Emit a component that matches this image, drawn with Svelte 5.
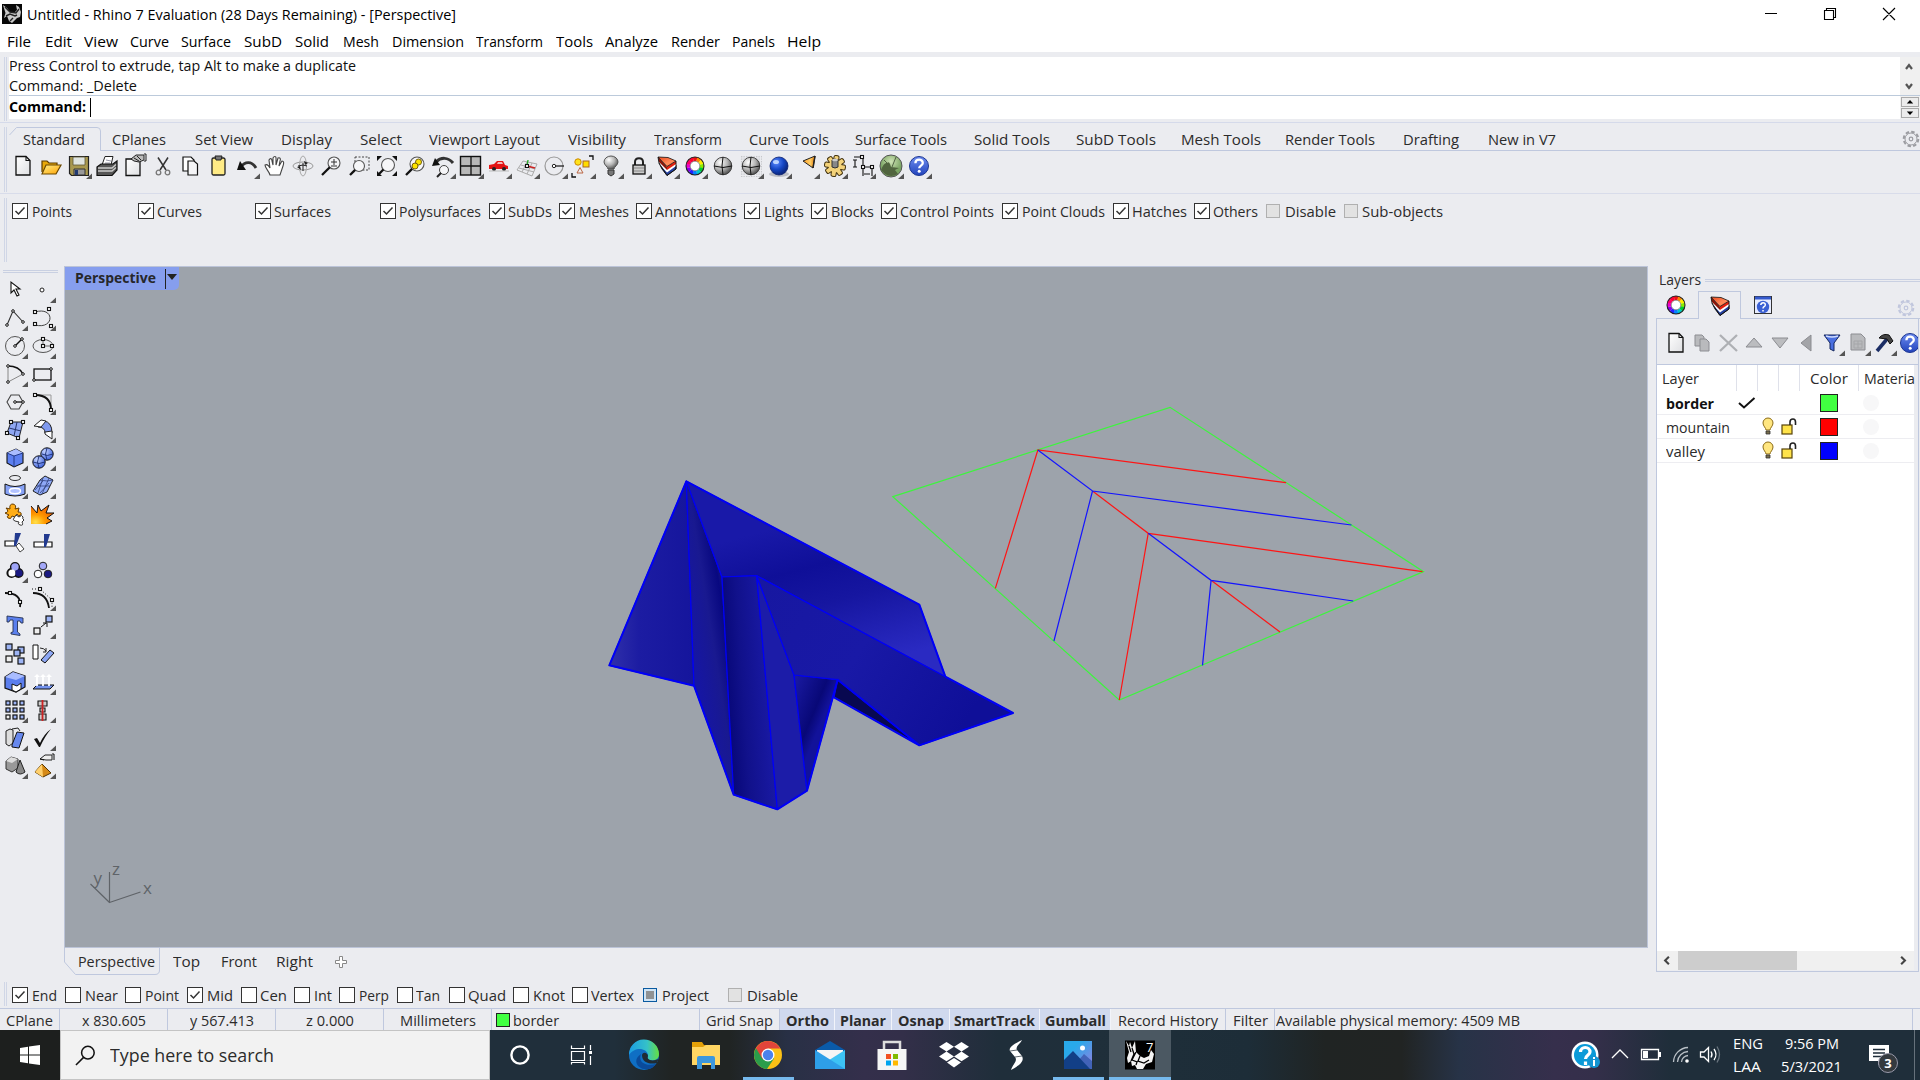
<script>
  // Turns [label, from, to, ...extra] entries into labels with a leading gap and a width.
  function flow(items, start = 0) {
    let end = start;
    return items.map(([label, from, to, ...extra]) => {
      const gap = from - 1 - end;
      end = to + 1;
      return { label, gap, width: to - from + 2, extra };
    });
  }

  // Same for check boxes: [label, box, text, textEnd, state]
  function flowChecks(items) {
    let end = 0;
    return items.map(([label, box, from, to, state]) => {
      const size = state === 'on' || state === 'off' ? 16 : 14;
      const c = { label, gap: box - end, inner: from - 1 - box - size, width: to - from + 2, state };
      end = to + 1;
      return c;
    });
  }

  function fit(node, width) {
    const natural = node.getBoundingClientRect().width;
    node.style.transform = `scaleX(${width / natural})`;
    node.style.marginRight = `${width - natural}px`;
  }

  const menu = flow([['File', 7, 29], ['Edit', 45, 70], ['View', 84, 116], ['Curve', 130, 167], ['Surface', 181, 229], ['SubD', 244, 280], ['Solid', 295, 327], ['Mesh', 343, 377], ['Dimension', 392, 462], ['Transform', 476, 541], ['Tools', 556, 591], ['Analyze', 605, 656], ['Render', 671, 718], ['Panels', 732, 773], ['Help', 787, 819]]);

  const tabs = flow([['CPlanes', 113, 165], ['Set View', 196, 252], ['Display', 282, 331], ['Select', 361, 401], ['Viewport Layout', 430, 539], ['Visibility', 569, 625], ['Transform', 655, 721], ['Curve Tools', 750, 828], ['Surface Tools', 856, 946], ['Solid Tools', 975, 1049], ['SubD Tools', 1077, 1155], ['Mesh Tools', 1182, 1260], ['Render Tools', 1286, 1374], ['Drafting', 1404, 1458], ['New in V7', 1489, 1555]], 100);

  const filters = flowChecks([['Points', 12, 33, 71, 'on'], ['Curves', 138, 158, 201, 'on'], ['Surfaces', 255, 275, 330, 'on'], ['Polysurfaces', 380, 400, 480, 'on'], ['SubDs', 489, 509, 551, 'on'], ['Meshes', 559, 580, 628, 'on'], ['Annotations', 636, 656, 736, 'on'], ['Lights', 744, 765, 803, 'on'], ['Blocks', 811, 832, 873, 'on'], ['Control Points', 881, 901, 993, 'on'], ['Point Clouds', 1002, 1023, 1104, 'on'], ['Hatches', 1113, 1133, 1186, 'on'], ['Others', 1194, 1214, 1257, 'on'], ['Disable', 1266, 1286, 1335, 'dis'], ['Sub-objects', 1344, 1363, 1442, 'dis']]);

  const osnaps = flowChecks([['End', 12, 33, 56, 'on'], ['Near', 65, 86, 117, 'off'], ['Point', 125, 146, 178, 'off'], ['Mid', 187, 208, 232, 'on'], ['Cen', 241, 261, 286, 'off'], ['Int', 294, 315, 331, 'off'], ['Perp', 339, 360, 388, 'off'], ['Tan', 397, 417, 439, 'off'], ['Quad', 449, 469, 505, 'off'], ['Knot', 513, 534, 564, 'off'], ['Vertex', 572, 592, 633, 'off'], ['Project', 643, 663, 708, 'part'], ['Disable', 728, 748, 797, 'dis']]);

  const viewTabs = flow([['Top', 174, 199], ['Front', 222, 256], ['Right', 277, 312]], 160);

  // [label, cell width, text width, kind]
  const status = [['CPlane', 60, 47], ['x 830.605', 108, 64], ['y 567.413', 108, 64], ['z 0.000', 108, 48], ['Millimeters', 108, 76], ['border', 208, 46, 'layer'], ['Grid Snap', 80, 67], ['Ortho', 55, 43, 'toggled'], ['Planar', 57, 46, 'toggled'], ['Osnap', 58, 46, 'toggled'], ['SmartTrack', 90, 81, 'toggled'], ['Gumball', 71, 61, 'toggled'], ['Record History', 115, 100], ['Filter', 49, 35], ['Available physical memory: 4509 MB', 638, 244, 'mem']];

  const lens = (x, y, r) => `<circle cx="${x}" cy="${y}" r="${r}" fill="#f6f6f8" stroke="#555" stroke-width="1.1"/><path d="M${x - r * 0.7} ${y + r * 0.7}L-9 9" stroke="#111" stroke-width="2.3"/>`;
  const node = (x, y, c = '#fff', s = 4) => `<rect x="${x - s / 2}" y="${y - s / 2}" width="${s}" height="${s}" fill="${c}" stroke="#111" stroke-width="1.1"/>`;
  const dot = (x, y) => `<circle cx="${x}" cy="${y}" r="1.3" fill="#fff" stroke="#111" stroke-width="1"/>`;
  const box = (x, y, s, c = '#9db4f4') => `<rect x="${x}" y="${y}" width="${s}" height="${s}" fill="${c}" stroke="#111" stroke-width="1.2"/>`;
  const hues = ['#e11', '#f80', '#fe0', '#8e0', '#0c3', '#0cc', '#08f', '#22f', '#80e', '#e0c', '#f06', '#f03'];
  const wheel = hues.map((c, i) => {
    const p = (a, r) => `${(r * Math.sin(a)).toFixed(2)} ${(-r * Math.cos(a)).toFixed(2)}`;
    const a = (i - 0.5) * Math.PI / 6, b = (i + 0.55) * Math.PI / 6;
    return `<path d="M${p(a, 5)}L${p(a, 9)}A9 9 0 0 1 ${p(b, 9)}L${p(b, 5)}Z" fill="${c}"/>`;
  }).join('') + '<circle r="9" fill="none" stroke="#222" stroke-width="1.1"/><circle r="4.8" fill="#fff" stroke="#555" stroke-width=".6"/>';
  const page = '<path d="M-7-9.500H3L7-5.500V9H-7Z" fill="url(#paper)" stroke="#111" stroke-width="1.300"/><path d="M3-9.500V-5.500H7" fill="none" stroke="#111" stroke-width="1.100"/>';
  const stack = '<path d="M-8-3L-5 3L0 9.500L9 3V-1L0 5Z" fill="#24409f" stroke="#111" stroke-width=".9"/><path d="M-8.500-5L0 3.500L9-2.500V0L0 6.500L-7-1Z" fill="#fff"/><path d="M-9-9L0 .500V4L-8-4Z" fill="#8e1508"/><path d="M0 .500L9-5V-2L0 4Z" fill="#e3200e"/><path d="M-9-9L1-8.500L9-5L0 .500Z" fill="url(#topface)" stroke="#111" stroke-width=".8"/><path d="M-9-9L-8-3L0 9.500L9 3V-5" fill="none" stroke="#111" stroke-width=".9"/>';
  const help = '<circle r="9.5" fill="url(#qblue)" stroke="#1c3692"/><path d="M-3.6-2.8C-3.6-7.4 3.8-7.4 3.8-3C3.8-.4.2-.3.2 2.2" fill="none" stroke="#fff" stroke-width="2.3"/><circle cx=".2" cy="5.3" r="1.5" fill="#fff"/>';
  const globe = '<circle r="8.800" fill="url(#ball)" stroke="#333" stroke-width=".9"/><path d="M-9 0Q0 3 9 0M0-9Q-2 0 0 9" fill="none" stroke="#111" stroke-width="1"/>';
  const teeth = [0, 45, 90, 135, 180, 225, 270, 315].map((a) => `<rect x="-2" y="-10" width="4" height="6" rx="1" transform="rotate(${a + 10})"/>`).join('');

  const icons = {
    page,
    open: '<path d="M-9 6V-5H-4L-2-3H6V-1" fill="#e8a90b" stroke="#5d3d00" stroke-width="1.2"/><path d="M-9 8L-5-1H10L5 8Z" fill="url(#fold)" stroke="#6d4900" stroke-width="1.2"/>',
    save: '<path d="M-9.500-9.500H9.500V9.500H-7.500L-9.500 7.500Z" fill="#a8984f" stroke="#222" stroke-width="1.2"/><path d="M-6-9H6V-1H-6Z" fill="#dfe4e0" stroke="#5e5635" stroke-width=".8"/><path d="M-5 3H6V9H-5Z" fill="#999" stroke="#333"/><path d="M-4 4H-1V9H-4Z" fill="#223a70"/>',
    print: '<path d="M-5-1L-2-9.500H6L4-1Z" fill="#fff" stroke="#222"/><path d="M-1-6L4-5M-2-3L3-3" stroke="#99a"/><path d="M-10 1L-6-2H6L10-5V4L5 9.500H-10Z" fill="#555" stroke="#111" stroke-width="1.2"/><path d="M-9 2H5L9-1.500M-9 5H5L9 1.500" fill="none" stroke="#ccc" stroke-width="1.300"/>',
    props: '<path d="M-9-7H5V9.500H-9Z" fill="url(#paper)" stroke="#111" stroke-width="1.3"/><path d="M-4-7L1-11H9V-6L4-4L-1-5Z" fill="#bbb" stroke="#222"/><path d="M-1-8L4-5M2-10L6-6M9-12H11V-5H9" stroke="#222" fill="none"/>',
    cut: '<path d="M-5-8.500L3 4M5-8.500L-3 4" stroke="#333" stroke-width="1.500"/><circle cx="-4.500" cy="6.500" r="2.300" fill="none" stroke="#777" stroke-width="1.300"/><circle cx="4.500" cy="6.500" r="2.300" fill="none" stroke="#777" stroke-width="1.300"/>',
    copy: '<path d="M-8-9H0L3-6V5H-8Z" fill="#fff" stroke="#111" stroke-width="1.2"/><path d="M-3-5H3L6.500-2V9H-3Z" fill="#f4f4f6" stroke="#111" stroke-width="1.2"/>',
    paste: '<rect x="-7" y="-8" width="13" height="17" rx="1.500" fill="#ffeb85" stroke="#222" stroke-width="1.300"/><path d="M-4-10H3L2-6H-3Z" fill="#777" stroke="#222"/>',
    undo: '<path d="M-6 1C-2-5 5-5 9 2" fill="none" stroke="#333" stroke-width="2.800"/><path d="M-10 4L-7-5L-1 4Z" fill="#111"/>',
    hand: '<path d="M-5 9C-6 5-10 2-10-1C-8-2-6 0-5 2L-6-6C-5-8-3-8-3-5L-2-1L-2-8C-1-10 1-10 1-8L1-1L3-8C5-9 6-7 5-5L4 0L7-5C9-5 9-3 8 0L5 9Z" fill="#fff" stroke="#444" stroke-width="1.100"/>',
    rotate: '<ellipse rx="10" ry="4" fill="none" stroke="#999"/><ellipse rx="3.500" ry="10" fill="none" stroke="#aaa"/><path d="M-5 0L0-1L4 0M0-3V5" stroke="#222" fill="none"/><path d="M1-5L5-3L2-1ZM-6 1L-2 4L-3 0Z" fill="#222"/>',
    zoom: lens(3, -3, 6) + '<path d="M0-4H6M3-7V-1M0 0H6" stroke="#333"/>',
    zoomwin: '<path d="M-4-9H10V4H-4Z" fill="none" stroke="#444" stroke-dasharray="2 1.5"/>' + lens(0, 0, 5.500),
    extents: lens(1, -1, 6.500) + '<path d="M-10-5V-10H-5ZM10-5V-10H5ZM10 5V10H5ZM-10 5V10H-5Z" fill="#111"/>',
    zoomsel: lens(2, -2, 7) + '<circle cx="3.500" cy="-4" r="3" fill="#fde500" stroke="#75610b"/><circle cx="0" cy="0" r="3" fill="#fde500" stroke="#75610b"/>',
    undoview: '<path d="M-7-4C-2-9 5-9 10-3" fill="none" stroke="#333" stroke-width="3"/><path d="M-11 0L-8-8L-3-1Z" fill="#111"/><circle cx="1" cy="4" r="4.500" fill="#f6f6f8" stroke="#444"/><path d="M-2 7L-6 11" stroke="#222" stroke-width="2"/>',
    four: '<rect x="-10.500" y="-9.500" width="20" height="18.500" fill="#b8b8b8" stroke="#111" stroke-width="1.400"/><path d="M0-9V9M-10 0H10" stroke="#111" stroke-width="1.300"/>',
    car: '<path d="M-10 3V-1L-5-2L-2-5H4L6-1L9 0V3Z" fill="#e31313"/><path d="M-2-2L-1-4H3L4-2Z" fill="#f6b5b5"/><circle cx="-5" cy="3" r="2" fill="#222"/><circle cx="5" cy="3" r="2" fill="#222"/><path d="M-10 5H10" stroke="#bbb"/>',
    cplane: '<path d="M-4-5L10-2L5 10L-10 4ZM0-4L-5 6M5-3L0 8M-6-1L8 3M-8 2L7 6" fill="none" stroke="#aaa"/><path d="M0 0L1-6" stroke="#2a2" stroke-width="1.300"/><path d="M0 0L8 2" stroke="#c22" stroke-width="1.600"/>' + node(0, 0, '#fff', 3),
    snapc: '<circle cx="-1" r="9" fill="none" stroke="#999" stroke-width="1.200"/><path d="M0 0H9" stroke="#222" stroke-width="1.300"/><circle cx="-1" r="1.700" fill="#fff" stroke="#222"/>',
    shapes: '<circle cx="-5" cy="-4" r="3.200" fill="#ffe21a" stroke="#c80"/><rect x="0" y="-5" width="6" height="6" fill="#ffdc00" stroke="#a62"/><path d="M-6 7L-3 1.500L0 7Z" fill="#eee" stroke="#b64"/><path d="M6-10H10V-6M-11 7V11H-7" fill="none" stroke="#111" stroke-width="1.300"/>',
    bulb: '<path d="M-3 3C-3 1-7-1-7-4A7 6 0 0 1 7-4C7-1 3 1 3 3Z" fill="url(#ball)" stroke="#555"/><path d="M-3 4H3V8L0 10L-3 8Z" fill="#777" stroke="#333"/>',
    lock: '<path d="M-4 0V-4C-4-9 4-9 4-4V0" fill="none" stroke="#222" stroke-width="2"/><rect x="-6" y="-1" width="12" height="9" fill="#ccc" stroke="#111" stroke-width="1.300"/><path d="M-5 2H5M-5 5H5" stroke="#888"/>',
    stack, wheel, help, globe,
    globegrid: '<rect x="-11" y="-11" width="22" height="22" fill="url(#dots)"/>' + globe,
    blue: '<ellipse cx="0" cy="8" rx="10" ry="3" fill="#9b9fa8" opacity=".6"/><circle r="9" fill="url(#bluefill)" stroke="#0a2070" stroke-width=".8"/><ellipse cx="-3" cy="-4" rx="3" ry="2" fill="#bcd4ff"/>',
    cone: '<path d="M-4-5L8-10L6 2Z" fill="url(#orange)" stroke="#222" stroke-width="1"/><path d="M8-10L6 2" stroke="#222" stroke-width="1.500"/>',
    gear: `<g fill="#f3d27a" stroke="#3f2f0a" stroke-width="2">${teeth}<circle r="6.500"/></g><g fill="#f3d27a">${teeth}<circle r="6.500"/></g><path d="M-3-6Q0-8 3-6V1Q0 3-3 1Z" fill="#888" stroke="#333"/><ellipse cy="-6" rx="3" ry="1.200" fill="#ccc"/>`,
    dims: '<path d="M-9-9H-2M-8-6V1M-10-6H-6M-10 1H-6M0-7V1H8M9 3V10M0 3V10M1 8H7" fill="none" stroke="#111" stroke-width="1.100"/>' + node(-1, -9, '#fff', 3) + node(0, 1, '#fff', 3) + node(9, 1, '#fff', 3),
    gh: '<circle r="11" fill="url(#green)" stroke="#555"/><path d="M-10 4Q-7-4-4-3Q-2-5-1-2L0 1L8 2L4 4L7 8Q0 12-6 8Z" fill="#51653f"/><path d="M1 1L5-9M-7-6L-4-3" fill="none" stroke="#46563a" stroke-width=".9"/>',
    arrow: '<path d="M-4-8V3L-1 0L2 6L4 5L1-1H5Z" fill="#fff" stroke="#111" stroke-width="1.100"/>',
    point: '<circle cx="-1" r="2" fill="#fff" stroke="#222"/>',
    pline: '<path d="M-8 7L-2-7L8 4" fill="none" stroke="#333" stroke-width="1.100"/>' + dot(-8, 7) + dot(-2, -7) + dot(8, 4),
    curve: '<path d="M-8-6C12-12 12 12-8 7" fill="none" stroke="#444"/>' + node(-8, -6, '#fff', 3) + node(6, -9, '#fff', 3) + node(-8, 6, '#fff', 3) + node(8, 8, '#fff', 3),
    circle: '<circle r="9.500" fill="none" stroke="#555"/><path d="M0 0L7-7" stroke="#111" stroke-width="1.400"/>' + dot(0, 0) + dot(7, -7),
    ellipse: '<ellipse rx="10" ry="6.500" fill="none" stroke="#555"/><path d="M0-7V0H9" fill="none" stroke="#666"/>' + node(0, -7, '#fff', 3) + node(0, 0, '#fff', 3) + node(9, 0, '#fff', 3),
    arc: '<path d="M-7 8V-8M-7 8L8 0" stroke="#888"/><path d="M-7-8Q4-8 8 0" fill="none" stroke="#111" stroke-width="1.400"/>' + dot(-7, -8) + dot(-7, 8) + dot(8, 0),
    rect: '<rect x="-9" y="-5" width="17" height="11" fill="none" stroke="#111" stroke-width="1.300"/>' + dot(-9, 6) + dot(8, -5),
    polygon: '<path d="M-4-7H4L8 0L4 7H-4L-8 0Z" fill="none" stroke="#444" stroke-width="1.100"/><path d="M0 0H8" stroke="#111" stroke-width="1.300"/>' + dot(0, 0) + dot(8, 0),
    fillet: '<path d="M-8-7H8V8" fill="none" stroke="#999"/><path d="M-8-7C3-7 8-2 8 8" fill="none" stroke="#111" stroke-width="1.900"/>' + node(-8, -7, '#fff', 3) + node(8, 8, '#fff', 3),
    srf: '<path d="M-4-8H8L4 8L-8 3Z" fill="#8ea6f2" stroke="#222"/><path d="M2-8L-1 6M-6-2L6 1" stroke="#26356d"/>' + node(-4, -8, '#fff', 3) + node(8, -8, '#fff', 3) + node(-8, 3, '#fff', 3) + node(3, 8, '#fff', 3),
    sweep: '<path d="M-5-3L1-9Q9-8 9 3L2 3Q2-3-5-3Z" fill="#7f99ee" stroke="#222"/><path d="M-9-4L-2-10L3-9L-2-3Z" fill="#fff" stroke="#222"/><path d="M2 2L9 1V9L2 4Z" fill="#fff" stroke="#222"/>',
    box: '<path d="M-8-5L1-9L8-5V5L-1 9L-8 5Z" fill="#5c7ff0" stroke="#111" stroke-width="1.100"/><path d="M-8-5L1-9L8-5L-1-2Z" fill="#a9bcff"/><path d="M-1-2V9M-8-5L-1-2L8-5" stroke="#223a8c" fill="none"/>',
    spheres: '<circle cx="4" cy="-4" r="6.200" fill="url(#bluelt)" stroke="#111"/><circle cx="-4" cy="4" r="6.200" fill="url(#bluelt)" stroke="#111"/><path d="M-10 4Q-4 7 2 4M-4-2Q-7 4-4 10M-1-4Q4-1 10-4M4-10Q1-4 4 2" fill="none" stroke="#172c74" stroke-width=".9"/>',
    project: '<ellipse cx="0" cy="-8" rx="5.500" ry="2.500" fill="none" stroke="#333"/><path d="M-10-2Q0 3 10-2V8Q0 12-10 8Z" fill="#87a2f6" stroke="#111"/><ellipse cy="5" rx="5.500" ry="2.700" fill="#b2c2ff" stroke="#fff" stroke-width="1.500"/>',
    mesh: '<path d="M-3-6L2-10L10-6L4 6L-3 9L-10 5Z" fill="#8ea8f6" stroke="#222"/><path d="M-6 0L7 0M0-8L-5 7M6-8L-1 8M-3-6L4-5L10-6M-8 4L0-5M-3 7L6-3" fill="none" stroke="#26356d" stroke-width=".7"/>',
    puzzle: '<path d="M-9-6L-5-5Q-6-10-2-10Q2-9 0-5L4-6L3-2Q7-2 6 1Q3 3 2 0L0 3L-3 2Q-4 6-7 4Q-9 2-6 1L-10-1Q-5-2-9-6Z" fill="#ffad16" stroke="#653b00"/><path d="M1 1L4 3Q7 0 8 3Q7 5 9 6L7 8Q9 12 5 11Q2 10 4 8L0 7Q-3 6-1 4Z" fill="#fff" stroke="#333"/>',
    explode: '<path d="M-12 10V-8L-6-1L-5-9L-2-3L6-9L3-1L11-1L4 4L9 7L3 10Z" fill="url(#fire)"/><path d="M-12-8L-6-1L-5-9L-2-3L6-9L3-1L11-1L4 4L9 7L3 10" fill="none" stroke="#111" stroke-width="1"/>',
    trim: '<path d="M-10-1H0V4H-10Z" fill="#fff" stroke="#111" stroke-width="1.200"/><path d="M1 4L4 1L9 7L5 10Z" fill="#fff" stroke="#444"/><path d="M0-9H6L1 4H-1Z" fill="#223a8f"/>',
    split: '<path d="M-9 0H9V5H-9Z" fill="#fff" stroke="#111" stroke-width="1.200"/><path d="M1-8H7L3 5H1Z" fill="#223a8f"/>',
    join: '<g stroke="#111" stroke-width="2.200"><circle cy="-3" r="4"/><circle cx="-3.500" cy="3" r="4"/><circle cx="3.500" cy="3" r="4"/></g><circle cy="-3" r="3.700" fill="#9ea4f8"/><circle cx="-3" cy="3" r="3.600" fill="#fff"/><circle cx="4" cy="3" r="3.600" fill="#1b1a82"/>',
    group: '<g stroke="#222"><circle cy="-4" r="3.800" fill="#a3a8f8"/><circle cx="-5" cy="4" r="3.800" fill="#fff"/><circle cx="5" cy="4" r="3.800" fill="#1b1a82"/></g>',
    editpt: '<path d="M-10-5Q7-5 5 9" fill="none" stroke="#111" stroke-width="1.800"/>' + node(-5, -5, '#fff', 3) + node(5, 4, '#fff', 3),
    ctrl: '<path d="M-11-9H-3L9 2V10" fill="none" stroke="#111" stroke-dasharray="1 2"/><path d="M-10-5Q4-5 6 10" fill="none" stroke="#111" stroke-width="1.800"/>' + node(-3, -9, '#fff', 3) + node(9, 2, '#fff', 3),
    text: '<path d="M-8-10L8-8V-3L6-3L5-5H2.500V6L5 8V9.500L-4 8V6.500L-2 6V-6L-5-6L-6-4L-8-4Z" fill="#5b80ee" stroke="#26314f" stroke-width=".9"/>',
    move: box(-9, 2, 6, '#eee') + box(3, -10, 6) + '<path d="M-2 1L3-3M0-3H4V1" fill="none" stroke="#111"/>',
    copyobj: box(-9, -10, 6) + box(3, -7, 6) + box(-1, -4, 6) + box(-9, 2, 6, '#eee') + box(3, 4, 6),
    rot: '<path d="M-10-9H-5V5H-10Z" fill="#fff" stroke="#111"/><path d="M-2 6L7-4L11-1L2 9Z" fill="#8da7f4" stroke="#111"/><path d="M-3-6Q1-6 3-3M3-6V-2H0" fill="none" stroke="#222"/>',
    boolean: '<path d="M-10-5L-2-10L10-6V5L1 10L-10 6Z" fill="#5b7eed" stroke="#111" stroke-width="1.200"/><path d="M-10-5L-2-10L10-6L1-2Z" fill="#a9bcff"/><path d="M-3 8V2L2 4L6 1V7L1 10Z" fill="#fff" stroke="#111"/>',
    normals: '<path d="M-10 7L-6 3H11L7 7Z" fill="#7594ef" stroke="#111"/><g stroke="#fff" stroke-width="1.800" fill="#fff"><path d="M-6 4V-5M0 4V-5M6 4V-5"/><path d="M-9-5L-6-8L-3-5ZM-3-5L0-8L3-5ZM3-5L6-8L9-5Z" stroke="none"/></g>',
    array: [-9, -2, 5].map((y) => [-9, -2, 5].map((x) => box(x, y, 4, x < -8 && y > 4 ? '#eee' : undefined)).join('')).join(''),
    align: '<path d="M-5-9H4V-4H-5ZM-3-2H2V2H-3ZM-4 4H3V10H-4Z" fill="#ccc" stroke="#111" stroke-width="1.100"/><path d="M-.500-10V11" stroke="#c22" stroke-width="1.800"/>',
    flow: '<path d="M-9-7L-5-9L-2-8V5L-6 8L-9 6Z" fill="#ddd" stroke="#222"/><path d="M-3 7L2-6L9-5L4 10L-3 9Z" fill="#6788ee" stroke="#111"/><path d="M-3-9L3-10L5-7" fill="none" stroke="#222"/>',
    check: '<path d="M-9 1L-6 0L-3 5Q1-4 8-9Q2-2-3 9H-4Z" fill="#111"/>',
    solids: '<path d="M-9-5L-4-9L3-7V2L-3 6L-9 3Z" fill="#999" stroke="#333"/><path d="M-9-5L-4-9L3-7L-3-3Z" fill="#ddd"/><path d="M5-6L10 6Q5 10 1 6Z" fill="#888" stroke="#222"/>',
    pyramid: '<path d="M-1-2L8 7L0 11L-8 6Z" fill="#d68a17" stroke="#543400"/><path d="M-1-2L0 11L-8 6Z" fill="#ffd06d"/><path d="M-3-7L2-11L9-11V-6L3-6Z" fill="#eee" stroke="#222"/><path d="M-3-7L1-6M9-12H11V-6" stroke="#111" fill="none"/>',
    copypages: '<g fill="#b9babd" stroke="#8c8d92"><path d="M-7-8H0L2-6V3H-7Z"/><path d="M-2-4H4L7-1V8H-2Z"/></g>',
    del: '<path d="M-8-8L9 8M9-8L-8 8" stroke="#aeb0b4" stroke-width="2.300"/>',
    up: '<path d="M-8 4L0-5L8 4Z" fill="#bbbcbf" stroke="#8b8c91"/>',
    down: '<path d="M-8-5H8L0 5Z" fill="#bbbcbf" stroke="#8b8c91"/>',
    left: '<path d="M-5 0L5-8V8Z" fill="#a3a4a8" stroke="#8b8c91"/>',
    funnel: '<path d="M-8-8H8L2 0V8L-2 6V0Z" fill="#4a6fe0" stroke="#14265e"/><path d="M-6-7Q0-5 6-7" fill="none" stroke="#cfdbff" stroke-width="1.500"/>',
    graypage: '<path d="M-7-9H3L7-5V7H-7Z" fill="#b9babd" stroke="#8c8d92"/><path d="M-4-2H4V5H-4ZM0-2V5M-4 1H4" fill="none" stroke="#a5a6a9"/>',
    hammer: '<path d="M3-4L-7 8" stroke="#1c2e66" stroke-width="3.600"/><path d="M-5-5Q-1-10 5-8L9-2L6 1L3-4Z" fill="#444" stroke="#111"/>',
    helpwin: '<rect x="-8.500" y="-8.500" width="17" height="17" fill="#e7ecff" stroke="#333"/><path d="M-8-7H8" stroke="#355ace" stroke-width="3"/><circle cy="2" r="6.200" fill="#3a60d4"/><path d="M-2.200 0C-2-3 2.500-3 2.300 0C2 2 0 1.500 0 3.500M0 5V6.500" fill="none" stroke="#fff" stroke-width="1.500"/>',
    cog: '<circle r="7.300" fill="none" stroke="currentColor" stroke-width="2" stroke-dasharray="3.500 2.230"/><circle r="6" fill="none" stroke="currentColor" stroke-width="1"/><circle r="1.800" fill="none" stroke="currentColor" stroke-width="1.200"/>',
    litbulb: '<path d="M-2 3C-2 1-5-1-5-4A5 5 0 0 1 5-4C5-1 2 1 2 3Z" fill="#ffe680" stroke="#8c6b16"/><path d="M-2 4H2V7H-2Z" fill="#776d4c" stroke="#333" stroke-width=".8"/>',
    unlock: '<rect x="-7" y="-2" width="10" height="9" fill="#ffe34a" stroke="#57430a" stroke-width="1.200"/><path d="M1-2V-5Q1-8 4-8Q6.500-8 6.500-5V-2" fill="none" stroke="#222" stroke-width="1.600"/>',
  };

  // A trailing "+" marks a button with a fly-out triangle.
  const toolbar = 'page open save+ print props cut copy paste undo+ hand rotate zoom zoomwin extents zoomsel undoview+ four+ car+ cplane+ snapc+ shapes+ bulb+ lock+ stack+ wheel+ globe globegrid+ blue+ cone+ gear+ dims+ gh+ help+'.split(' ');
  const sidebar = 'arrow point+ pline+ curve+ circle+ ellipse+ arc+ rect+ polygon+ fillet+ srf+ sweep+ box+ spheres+ project+ mesh+ puzzle explode trim split join+ group editpt ctrl+ text move+ copyobj rot boolean+ normals+ array+ align+ flow+ check+ solids+ pyramid+'.split(' ');
  const layerTools = 'page copypages del up down left funnel+ graypage+ hammer+ help'.split(' ');

  const layers = [
    { name: 'border', width: 48, color: '#41ff41', current: true },
    { name: 'mountain', width: 64, color: '#ff0000' },
    { name: 'valley', width: 39, color: '#0000ff' },
  ];
</script>

{#snippet icon(name)}
  {@const id = name.replace('+', '')}
  <svg class="ico" viewBox="-14 -14 28 28">
    {@html icons[id]}
    {#if name.endsWith('+')}<path d="M13 7.500V13H7Z" fill="#555" />{/if}
  </svg>
{/snippet}

{#snippet label(text, width)}
  <span class="fit" use:fit={width}>{text}</span>
{/snippet}

{#snippet checks(items)}
  {#each items as c}
    <label class="chk" style:margin-left="{c.gap}px">
      <i class="cb {c.state}">
        {#if c.state === 'on'}<svg viewBox="0 0 14 14"><path d="M2.500 7L5.500 10L11.500 3.500" fill="none" stroke="#333" stroke-width="1.500" /></svg>{/if}
      </i>
      <span class="sp" style:width="{c.inner}px"></span>{@render label(c.label, c.width)}
    </label>
  {/each}
{/snippet}

<svg class="defs" width="0" height="0">
  <defs>
    <linearGradient id="paper" x2="1" y2="1"><stop stop-color="#fff" /><stop offset="1" stop-color="#dedfe2" /></linearGradient>
    <linearGradient id="topface" x2="1" y2="1"><stop stop-color="#f0481c" /><stop offset=".6" stop-color="#ff8a5a" /><stop offset="1" stop-color="#ff6a33" /></linearGradient>
    <linearGradient id="fold" x2="1" y2="1"><stop stop-color="#fff08a" /><stop offset="1" stop-color="#ffa200" /></linearGradient>
    <linearGradient id="orange"><stop stop-color="#ff9c22" /><stop offset=".6" stop-color="#ffd069" /><stop offset="1" stop-color="#e0790a" /></linearGradient>
    <radialGradient id="fire" cx=".2" cy=".9" r=".8"><stop stop-color="#ffe14a" /><stop offset=".5" stop-color="#ff9b00" /><stop offset="1" stop-color="#f26a00" /></radialGradient>
    <radialGradient id="ball" cx=".35" cy=".3" r=".8"><stop stop-color="#fff" /><stop offset=".5" stop-color="#b5b5b5" /><stop offset="1" stop-color="#3a3a3a" /></radialGradient>
    <radialGradient id="bluefill" cx=".35" cy=".3" r=".8"><stop stop-color="#5d8cff" /><stop offset=".5" stop-color="#1546c4" /><stop offset="1" stop-color="#061a63" /></radialGradient>
    <radialGradient id="bluelt" cx=".35" cy=".3" r=".8"><stop stop-color="#c6d4ff" /><stop offset="1" stop-color="#2f55d6" /></radialGradient>
    <linearGradient id="qblue" x2="0" y2="1"><stop stop-color="#6d8cf0" /><stop offset="1" stop-color="#2243bb" /></linearGradient>
    <radialGradient id="green" cy=".3"><stop stop-color="#cfe3b6" /><stop offset="1" stop-color="#7aa463" /></radialGradient>
    <pattern id="dots" width="2.500" height="2.500" patternUnits="userSpaceOnUse"><rect width="1.300" height="1.300" fill="#c3c4c8" /></pattern>
  </defs>
</svg>

<div class="app">
  <header class="title">
    <svg class="rhino" viewBox="0 0 20 20"><rect width="20" height="20" fill="#080808" /><path d="M1 1L3.500 9L2 14L5 12L7 17L10 19L15 14L18 13L19 8L17 3L14 1L15 6L12 9L8 8L5 4Z" fill="#c9c9c9" /><path d="M3 3L8 8L14 9L17 5M4 12L8 10L13 12L15 11M8 17L11 14" stroke="#222" stroke-width="1.400" fill="none" /></svg>
    {@render label('Untitled - Rhino 7 Evaluation (28 Days Remaining) - [Perspective]', 429)}
    <svg class="winbtns" viewBox="0 0 132 14"><path d="M0 6.500H12M59.500 3.500H68.500V12.500H59.500ZM61.500 3.500V1.500H70.500V10.500H68.500M118 1L130 13M130 1L118 13" fill="none" stroke="#000" stroke-width="1.100" /></svg>
  </header>
  <nav class="menu">
    {#each menu as m}<span style:margin-left="{m.gap}px">{@render label(m.label, m.width)}</span>{/each}
  </nav>

  <section class="command">
    <div class="grip"></div>
    <div class="cmdbox">
      <div class="history">
        <div class="lines">
          <p>{@render label('Press Control to extrude, tap Alt to make a duplicate', 347)}</p>
          <p>{@render label('Command: _Delete', 128)}</p>
        </div>
        <div class="scroll">
          <svg viewBox="0 0 20 38"><path d="M6 12L9 8L12 12M6 27L9 31L12 27" fill="none" stroke="#555" stroke-width="2.200" /></svg>
        </div>
      </div>
      <div class="prompt">
        <b>{@render label('Command:', 77)}</b><i class="caret"></i>
        <div class="spin">
          <svg viewBox="0 0 18 10"><path d="M5 7L9 2.500L13 7Z" /></svg>
          <svg viewBox="0 0 18 10"><path d="M5 3L9 7.500L13 3Z" /></svg>
        </div>
      </div>
    </div>
  </section>

  <section class="tools">
    <div class="grip"></div>
    <div class="toolbody">
      <div class="tabs">
        <div class="tab"><svg viewBox="0 0 92 24"><path d="M.5 8L7.500.5H88Q91.500.5 91.500 4V24" fill="none" stroke="#bfc8de" /></svg>{@render label('Standard', 62)}</div>
        <div class="tabrest">
          {#each tabs as t}<span style:margin-left="{t.gap}px">{@render label(t.label, t.width)}</span>{/each}
          <span class="cog">{@render icon('cog')}</span>
        </div>
      </div>
      <div class="icons">{#each toolbar as t}{@render icon(t)}{/each}</div>
    </div>
  </section>

  <section class="filters">
    <div class="grip"></div>
    <div class="row">{@render checks(filters)}</div>
  </section>

  <main>
    <aside class="side">
      <div class="hgrip"></div>
      <div class="grid">{#each sidebar as s}{@render icon(s)}{/each}</div>
    </aside>

    <div class="center">
      <div class="viewport">
        <div class="vtitle"><b>{@render label('Perspective', 81)}</b><i></i><svg viewBox="0 0 10 6"><path d="M0 0H10L5 6Z" fill="#222" /></svg></div>
        <svg class="scene" viewBox="65 267 1582 680">
          <defs>
            <linearGradient id="f1"><stop stop-color="#3030aa" /><stop offset=".35" stop-color="#1c1ca2" /><stop offset="1" stop-color="#15159c" /></linearGradient>
            <linearGradient id="f2" gradientUnits="userSpaceOnUse" x1="325" y1="480" x2="450" y2="460"><stop stop-color="#1616a2" /><stop offset=".5" stop-color="#191990" /><stop offset=".85" stop-color="#080880" /><stop offset="1" stop-color="#1b1b86" /></linearGradient>
            <linearGradient id="f3" gradientUnits="userSpaceOnUse" x1="640" y1="190" x2="760" y2="640"><stop stop-color="#1919a8" /><stop offset=".3" stop-color="#0f0f98" /><stop offset=".55" stop-color="#1616a0" /><stop offset="1" stop-color="#2a2ac2" /></linearGradient>
            <linearGradient id="f4" gradientUnits="userSpaceOnUse" x1="430" y1="600" x2="580" y2="590"><stop stop-color="#070777" /><stop offset=".35" stop-color="#11118b" /><stop offset="1" stop-color="#1b1ba9" /></linearGradient>
            <linearGradient id="f5" gradientUnits="userSpaceOnUse" x1="640" y1="650" x2="760" y2="700"><stop stop-color="#1b1ba4" /><stop offset=".75" stop-color="#080877" /><stop offset="1" stop-color="#12129a" /></linearGradient>
            <linearGradient id="f6" x2="1" y2=".4"><stop stop-color="#1717a0" /><stop offset=".5" stop-color="#1919a6" /><stop offset="1" stop-color="#0f0f98" /></linearGradient>
          </defs>
          <g transform="translate(580 460) scale(.33333)" stroke="#0000f5" stroke-width="3.600" stroke-linejoin="round">
            <path d="M762 712L773 659L1018 856Z" fill="#080850" />
            <path d="M319 64L88 616L342 677Z" fill="url(#f1)" />
            <path d="M319 64L342 677L461 1004L426 351Z" fill="url(#f2)" />
            <path d="M319 64L1018 434L1096 650L530 347L426 351Z" fill="url(#f3)" />
            <path d="M426 351L530 347L592 1048L461 1004Z" fill="url(#f4)" />
            <path d="M530 347L642 645L681 992L592 1048Z" fill="#1c1ca8" />
            <path d="M642 645L773 659L681 992Z" fill="url(#f5)" />
            <path d="M530 347L1299 759L1018 856L773 659L642 645Z" fill="url(#f6)" />
            <path d="M1096 650L1018 434L319 64L88 616L342 677L461 1004L592 1048L681 992L773 659L1018 856L1299 759L1096 650M762 712L1018 856" fill="none" stroke-width="6" />
          </g>
          <g transform="translate(880 390) scale(.35714 .33333)" fill="none">
            <path class="ln" stroke="#3df53d" d="M36 320L812 52L1522 545L670 930Z" />
            <path class="ln" stroke="#ff1414" d="M1137 278L442 180L323 595M595 303L751 430L1519 545M751 430L670 930M927 571L1120 726" />
            <path class="ln" stroke="#1414ff" d="M442 180L595 303L1320 405M595 303L487 753M751 430L927 571L1325 633M927 571L903 826" />
          </g>
          <path d="M109.500 872V902.500L140.500 892M109.500 902.500L90.500 884" fill="none" stroke="#5f6368" stroke-width="1.200" />
          <g class="axis"><text x="112" y="875">z</text><text x="93.500" y="884">y</text><text x="143" y="893.500">x</text></g>
        </svg>
      </div>
      <div class="viewtabs">
        <div class="vtab"><svg viewBox="0 0 96 28"><path d="M.5 0V14L11.500 26.500H91Q95.500 26.500 95.500 22V0" fill="none" stroke="#bfc8de" /></svg>{@render label('Perspective', 77)}</div>
        {#each viewTabs as t}<span style:margin-left="{t.gap}px">{@render label(t.label, t.width)}</span>{/each}
        <svg class="plus" viewBox="0 0 12 12"><path d="M4.500.5H7.500V4.500H11.500V7.500H7.500V11.500H4.500V7.500H.5V4.500H4.500Z" fill="#fff" stroke="#888" /></svg>
      </div>
    </div>

    <aside class="panel">
      <div class="ptitle">{@render label('Layers', 42)}<div class="hgrip"></div></div>
      <div class="ptabs">
        <div class="pt first">{@render icon('wheel')}</div>
        <div class="pt act">{@render icon('stack')}</div>
        <div class="pt third">{@render icon('helpwin')}</div>
        <div class="pt last">{@render icon('cog')}</div>
      </div>
      <div class="pbody">
        <div class="ptools">{#each layerTools as t}{@render icon(t)}{/each}</div>
        <div class="table">
          <div class="tr head">
            <span class="c1">{@render label('Layer', 37)}</span><span class="c2"></span><span class="c2"></span><span class="c2"></span>
            <span class="c3">{@render label('Color', 38)}</span><span class="c4">{@render label('Materia', 51)}</span>
          </div>
          {#each layers as l}
            <div class="tr" class:cur={l.current}>
              <span class="c1 nm">{@render label(l.name, l.width)}</span>
              {#if l.current}
                <span class="c2"><svg class="tick" viewBox="0 0 18 12"><path d="M1 6L6 10.500L16.500 1" fill="none" stroke="#111" stroke-width="2" /></svg></span><span class="c2"></span><span class="c2"></span>
              {:else}
                <span class="c2"></span><span class="c2">{@render icon('litbulb')}</span><span class="c2">{@render icon('unlock')}</span>
              {/if}
              <span class="c3 swc"><i class="sw" style:background={l.color}></i></span>
              <span class="c4"><i class="mat"></i></span>
            </div>
          {/each}
        </div>
        <div class="hscroll">
          <svg viewBox="0 0 20 20"><path d="M12 6L8 10L12 14" /></svg><i></i><svg viewBox="0 0 20 20"><path d="M7 6L11 10L7 14" /></svg>
        </div>
      </div>
    </aside>
  </main>

  <section class="osnap">
    <div class="grip"></div>
    <div class="row">{@render checks(osnaps)}</div>
  </section>

  <footer class="status">
    {#each status as [text, cell, width, kind]}
      <div class="cell {kind ?? ''}" style:width="{cell}px">
        {#if kind === 'layer'}<i></i>{/if}{@render label(text, width)}
      </div>
    {/each}
  </footer>

  <div class="taskbar">
    <div class="start"><svg viewBox="0 0 20 20"><path d="M0 3L8 1.800V9.500H0ZM9 1.600L20 0V9.500H9ZM0 10.500H8V18.200L0 17ZM9 10.500H20V20L9 18.400Z" fill="#fff" /></svg></div>
    <div class="search">
      <svg viewBox="0 0 22 22"><circle cx="13.500" cy="8" r="6.600" fill="none" stroke="#111" stroke-width="1.600" /><path d="M9 13L1 21" stroke="#111" stroke-width="1.600" /></svg>
      {@render label('Type here to search', 164)}
    </div>
    <div class="apps">
      <div class="app-ico"><svg viewBox="-16 -16 32 32"><circle r="8.600" fill="none" stroke="#fff" stroke-width="2.400" /></svg></div>
      <div class="app-ico"><svg viewBox="-16 -16 32 32"><path d="M-10.500-9.500V-6.500H2.500V-9.500M-10.500-3.500H2.500V5.500H-10.500ZM-10.500 9.500V7.500H2.500V9.500M8.500-10V-5M8.500 1V10" fill="none" stroke="#fff" stroke-width="1.200" /><rect x="7" y="-4" width="3" height="3" fill="#fff" /></svg></div>
      <div class="app-ico"><svg viewBox="-16 -16 32 32"><defs><linearGradient id="e1" x2="1"><stop stop-color="#1b9de2" /><stop offset=".6" stop-color="#35c1c9" /><stop offset="1" stop-color="#66e03f" /></linearGradient></defs><circle r="15" fill="#0f6fc4" /><path d="M-15 0A15 15 0 0 1 15-1C15 5 10 6 5 5C3 4 4 3 4 0C3-7-9-9-15 0Z" fill="url(#e1)" /><path d="M-3-1C-6 6 0 12 12 9L8 13C-4 18-14 6-3-1Z" fill="#0a4b9b" /><path d="M-2 0C-1-4 4-2 4 1C3 3 4 4 6 5C9 6 12 5 14.500 4L13 8C5 10-2 7-2 0Z" fill="#202b33" /></svg></div>
      <div class="app-ico"><svg viewBox="-16 -16 32 32"><path d="M-14-13H-4L-2-10H14V10H-14Z" fill="#e3a008" /><path d="M-14-8H-3L0-10H14V10H-14Z" fill="#ffd663" /><path d="M-9 14V3Q-9 1-7 1H7Q9 1 9 3V14H5V8H-4V14Z" fill="#3c97dd" /></svg></div>
      <div class="app-ico run"><svg viewBox="-16 -16 32 32"><circle r="14" fill="#fbc116" /><path d="M-12.100-7A14 14 0 0 0-1 14L6 3.500L0 0Z" fill="#2b9d4b" /><path d="M0-6.500H12.500L12.100-7A14 14 0 0 0-12.100-7L-5.500 4Z" fill="#e2453a" /><circle r="6.500" fill="#fff" /><circle r="5.200" fill="#4a82ec" /></svg></div>
      <div class="app-ico"><svg viewBox="-16 -16 32 32"><path d="M-15-5L0-14L15-5V14H-15Z" fill="#0a5aa8" /><path d="M-13-5H13V0L0 7L-13 0Z" fill="#f5f5f5" /><path d="M15-5L-15 14H15Z" fill="#3dc3f5" /><path d="M-15-5L15 14H-15Z" fill="#2e9fe8" /></svg></div>
      <div class="app-ico"><svg viewBox="-16 -16 32 32"><path d="M-8-6V-13H8V-6" fill="none" stroke="#ddd" stroke-width="2.500" /><path d="M-14.500-6H14.500V15H-14.500Z" fill="#f6f6f6" /><path d="M-6-1H-1V4H-6Z" fill="#f25022" /><path d="M1-1H6V4H1Z" fill="#7fba00" /><path d="M-6 5.500H-1V10.500H-6Z" fill="#00a4ef" /><path d="M1 5.500H6V10.500H1Z" fill="#ffb900" /></svg></div>
      <div class="app-ico"><svg viewBox="-16 -16 32 32"><path d="M-7.500-13L0-8.200L-7.500-3.400L-15-8.200ZM7.500-13L15-8.200L7.500-3.400L0-8.200ZM-7.500-3.400L0 1.400L-7.500 6.200L-15 1.400ZM7.500-3.400L15 1.400L7.500 6.200L0 1.400ZM0 3L7 7.500L0 12.500L-7 7.500Z" fill="#fff" /></svg></div>
      <div class="app-ico"><svg viewBox="-16 -16 32 32"><path d="M6-15C0-12-8-8-6-4L-1 2C2 6-3 9-5 15C2 11 9 7 6 1L1-5C-1-8 4-11 6-15Z" fill="#fff" /><path d="M-6-4L1-5M-1 2L6 1" stroke="#202b35" stroke-width=".7" /></svg></div>
      <div class="app-ico run"><svg viewBox="-16 -16 32 32"><defs><linearGradient id="ph" x2="1" y2="1"><stop offset=".3" stop-color="#29a9ea" /><stop offset="1" stop-color="#9a7de0" /></linearGradient></defs><rect x="-14" y="-14" width="28" height="28" fill="url(#ph)" /><path d="M0 6L6-1L14 6V14H2Z" fill="#4263b8" /><path d="M-14 5L-5-4L12 14H-14Z" fill="#123f86" /><circle cx="4.500" cy="-7" r="2.500" fill="#fff" /></svg></div>
      <div class="app-ico run active"><svg viewBox="-16 -16 32 32"><rect x="-15" y="-14.500" width="30" height="29" fill="#000" /><path d="M-14-14L-11-3L-13 3L-12 8L-9 6L-8 11L-5 10L-3 14L3 14L6 9L12 7L14-1L11-5L9 1L4 3L0 1L-4-3L-5-14L-8-7L-10-13L-11-9Z" fill="#f4f4f4" /><path d="M-8-7L-6-1L-9 6M-4-3L-8 5L-3 7L-4 10M0 1L-2 6L4 8L9 5M-11-9L-9-3" stroke="#000" stroke-width="1.300" fill="none" /></svg><span>7</span></div>
    </div>
    <div class="tray">
      <svg class="qi" viewBox="-15 -15 30 30"><circle r="13.500" fill="#fff" /><circle r="11" fill="#0b9ad8" /><path d="M-4.500-3C-4.500-9 5-9 5-3C5 0 .5 0 .5 4M.500 6.500V10" fill="none" stroke="#fff" stroke-width="3.200" /><circle cx="9" cy="7" r="6" fill="#1394d2" /><path d="M9 5V11M9 2V4" stroke="#fff" stroke-width="2" /></svg>
      <svg class="sysicons" viewBox="1610 1040 112 32"><g fill="none" stroke="#fff" stroke-width="1.300"><path d="M1612 1059L1620 1051L1628 1059M1641.500 1050.500H1658.500V1060.500H1641.500Z" /><path d="M1673.500 1063A15 15 0 0 1 1688 1048.500M1677.500 1063A11 11 0 0 1 1688 1052.500M1681.500 1063A7 7 0 0 1 1688 1056.500" stroke="#b9c0c6" /><path d="M1700.500 1053H1704L1708.500 1048.500V1062.500L1704 1058H1700.500ZM1711 1052.500Q1713 1055.500 1711 1058.500M1714 1050Q1718 1055.500 1714 1061" /><path d="M1717 1047.500Q1722 1055.500 1717 1063.500" stroke="#69747e" /></g><path d="M1643 1052H1648V1059H1643ZM1659 1053H1661V1058H1659Z" fill="#fff" /><circle cx="1687" cy="1062" r="1.800" fill="#fff" /></svg>
      <div class="two lang"><span>{@render label('ENG', 30)}</span><span>{@render label('LAA', 28)}</span></div>
      <div class="two clock"><span>{@render label('9:56 PM', 54)}</span><span>{@render label('5/3/2021', 61)}</span></div>
      <div class="note"><svg viewBox="0 0 20 20"><path d="M0 0H20V16H13L9 20V16H0Z" fill="#fff" /><path d="M4 4.500H16M4 8H16M4 11.500H16" stroke="#1f2d3a" stroke-width="1.300" /></svg><b>3</b></div>
      <i class="peek"></i>
    </div>
  </div>
</div>

<style>
  :global(body) { background: #ebecf0; overflow: hidden; }
  .app { width: 1920px; height: 1080px; display: flex; flex-direction: column; background: #ebecf0; color: #2b2b2b; font: 15px/20px "Open Sans", "Noto Sans", sans-serif; overflow: hidden; }
  .app * { box-sizing: border-box; }
  .defs { display: block; }
  p { margin: 0; }
  i { font-style: normal; }
  .fit { display: inline-block; white-space: nowrap; transform-origin: 0 50%; flex: none; }
  .ico { width: 28px; height: 28px; flex: none; display: block; }

  .title { height: 30px; flex: none; display: flex; align-items: center; background: #fff; color: #000; padding: 0 24px 2px 2px; }
  .rhino { width: 20px; height: 20px; margin-right: 5px; }
  .winbtns { width: 132px; height: 14px; margin-left: auto; margin-right: -1px; }
  .menu { height: 22px; flex: none; display: flex; align-items: center; background: #fff; color: #000; padding-left: 1px; }
  .menu span, .tabrest span, .viewtabs span { flex: none; }

  .grip { width: 3px; margin-left: 4px; border: solid #d0d6e6; border-width: 0 1px; flex: none; }
  .hgrip { height: 3px; border: solid #c9d0e2; border-width: 1px 0; }

  .command { height: 71px; flex: none; display: flex; padding: 5px 0 4px; border-bottom: 1px solid #d5daea; }
  .command .grip { height: 64px; }
  .cmdbox { width: 1911px; margin-left: 2px; height: 62px; background: #fff; color: #111; flex: none; }
  .history { height: 39px; display: flex; border-bottom: 1px solid #bccadb; }
  .lines { flex: 1; }
  .lines p { height: 20px; line-height: 16px; }
  .lines .fit { line-height: 16px; }
  .scroll { width: 20px; background: #f0f0f0; }
  .scroll svg { width: 20px; height: 38px; display: block; }
  .prompt { height: 23px; display: flex; align-items: center; color: #000; }
  .prompt b { margin-top: -3px; }
  .caret { width: 1px; height: 19px; background: #000; margin-left: 4px; margin-top: -1px; }
  .spin { width: 20px; height: 23px; margin-left: auto; padding: 1px 1px 0; background: #f0f0f0; }
  .spin svg { display: block; height: 10px; margin-bottom: 1px; width: 18px; border: 1px solid #aaa; background: #ececec; fill: #000; }

  .tools { height: 71px; flex: none; display: flex; padding-top: 4px; border-bottom: 1px solid #d8dcea; }
  .tools .grip { height: 65px; }
  .toolbody { margin-left: 2px; width: 1911px; }
  .tabs { height: 24px; display: flex; }
  .tab { width: 91px; height: 24px; position: relative; padding: 2px 0 0 14px; }
  .tab > svg { position: absolute; left: 0; top: 0; width: 92px; height: 24px; }
  .tabrest { flex: 1; display: flex; align-items: center; border-bottom: 1px solid #bfc8de; padding-top: 1px; }
  .cog { margin-left: auto; color: #9b9ca1; margin-right: -5px; }
  .icons { display: flex; padding-top: 1px; }

  .filters { height: 72px; flex: none; display: flex; padding-top: 4px; }
  .filters .grip { height: 64px; }
  .row { display: flex; height: 27px; align-items: center; margin-left: -7px; }
  .chk { display: flex; align-items: center; flex: none; }
  .chk .fit { margin-top: -2px; }
  .cb { width: 16px; height: 16px; border: 1.500px solid #333; background: #fff; flex: none; margin-top: -1px; }
  .cb svg { width: 14px; height: 14px; display: block; }
  .cb.dis { width: 14px; height: 14px; border: 1px solid #b0b0b0; background: #e2e2e2; }
  .cb.part { width: 14px; height: 14px; border: 1px solid #0a5aa0; background: #8f9294; box-shadow: inset 0 0 0 2px #cfe4f5; }
  .sp { flex: none; }

  main { height: 716px; flex: none; display: flex; }
  .side { width: 64px; flex: none; padding-top: 4px; }
  .side .hgrip { width: 55px; margin-left: 3px; }
  .grid { display: grid; grid-template-columns: 28px 28px; padding: 3px 0 0 1px; }
  .center { width: 1584px; flex: none; }
  .viewport { height: 682px; border: 1px solid #bcc4d8; background: #9da3ab; position: relative; }
  .scene { width: 1582px; height: 680px; display: block; }
  .ln { vector-effect: non-scaling-stroke; stroke-width: 1.200px; }
  .axis { font-size: 17px; fill: #5f6368; }
  .vtitle { position: absolute; left: 0; top: 0; width: 114px; height: 23px; background: #869eee; border-radius: 0 0 5px 0; display: flex; align-items: center; padding-left: 10px; color: #26272b; }
  .vtitle b { margin-top: -4px; }
  .vtitle i { width: 1px; height: 20px; background: #222; margin-left: 9px; }
  .vtitle svg { width: 10px; height: 6px; margin-left: 1px; margin-top: -3px; }
  .viewtabs { height: 28px; display: flex; align-items: center; padding-bottom: 2px; }
  .vtab { width: 96px; height: 28px; position: relative; padding: 3px 0 0 14px; flex: none; margin-bottom: -2px; }
  .vtab > svg { position: absolute; left: 0; top: 0; width: 96px; height: 28px; }
  .plus { width: 12px; height: 12px; margin-left: 22px; margin-top: 2px; }

  .panel { width: 264px; margin-left: 8px; flex: none; }
  .ptitle { height: 25px; display: flex; align-items: center; padding: 1px 0 0 3px; }
  .ptitle .hgrip { flex: 1; margin-left: 4px; margin-top: 2px; }
  .ptabs { height: 28px; display: flex; }
  .pt { height: 28px; border-bottom: 1px solid #bfc8de; display: flex; align-items: center; }
  .first { width: 43px; padding-left: 6px; }
  .act { width: 44px; border: 1px solid #bfc8de; border-bottom: 0; padding-left: 7px; }
  .third { width: 123px; padding-left: 8px; }
  .last { flex: 1; color: #c0c6dd; padding: 6px 0 0 32px; }
  .pbody { border: 1px solid #bfc8de; border-top: 0; height: 653px; width: 263px; display: flex; flex-direction: column; }
  .ptools { height: 46px; display: flex; align-items: center; border-bottom: 1px solid #bfc8de; padding: 2px 0 0 5px; overflow: hidden; flex: none; }
  .ptools .ico { width: 28px; margin-right: -2px; }
  .table { flex: 1; background: #fff; width: 257px; }
  .tr { height: 24px; display: flex; border-bottom: 1px solid #ededf1; }
  .tr span { flex: none; }
  .tr > span { display: flex; align-items: center; height: 23px; }
  .head { height: 26px; border: 0; }
  .head > span { height: 26px; border-right: 1px solid #dfe1ea; }
  .c1 { width: 80px; padding-left: 5px; }
  .tr > .nm { padding-left: 9px; }
  .cur .nm { font-weight: bold; color: #111; }
  .c2 { width: 21px; }
  .c2 .ico { margin-left: -4px; }
  .tick { width: 18px; height: 12px; margin-left: 1px; flex: none; }
  .c3 { width: 59px; padding-left: 10px; }
  .tr > .swc { padding-left: 20px; }
  .c4 { padding-left: 4px; }
  .head > .c4 { border: 0; padding-left: 5px; }
  .sw { width: 18px; height: 18px; border: 1px solid #222; }
  .mat { width: 16px; height: 16px; border-radius: 50%; background: #f7f7f8; }
  .hscroll { height: 19px; width: 257px; background: #f0f0f0; display: flex; flex: none; margin-bottom: 1px; }
  .hscroll svg { width: 20px; height: 19px; fill: none; stroke: #444; stroke-width: 2.200; }
  .hscroll i { width: 119px; background: #cdcdcd; margin: 0 auto 0 1px; }

  .osnap { height: 26px; flex: none; display: flex; }
  .osnap .grip { height: 24px; }
  .status { height: 22px; flex: none; display: flex; border-top: 1px solid #bfc8de; }
  .cell { display: flex; align-items: center; justify-content: center; border-right: 1px solid #bfc8de; flex: none; }
  .cell.toggled { background: #d0d9ee; border-right-color: #f2f4fa; font-weight: bold; }
  .cell.layer, .cell.mem { justify-content: flex-start; padding-left: 4px; }
  .cell.mem { padding-left: 1px; }
  .cell.layer i { width: 14px; height: 14px; border: 1px solid #222; background: #41ff41; margin: 0 3px 0 0; }

  .taskbar { height: 50px; flex: none; display: flex; color: #fff; background: linear-gradient(90deg, #1d1f1e 0 3%, #202f3b 25.500%, #202f3b 32%, #202423 35%, #202423 38%, #283045 41%, #342f4b 45%, #332f49 47%, #1f2e3a 52%, #1f2f3a 57%, #1d2d38 65%, #202423 69%, #212423 73%, #273347 76%, #362f4c 81%, #342f4a 83%, #1f2e3a 87%, #1f2e3a); }
  .start { width: 60px; display: flex; align-items: center; padding-left: 20px; }
  .start svg { width: 20px; height: 20px; }
  .search { width: 430px; background: #f2f2f2; border: 1px solid #c4c4c4; color: #2b2b2b; display: flex; align-items: center; font-size: 18.500px; padding-left: 14px; }
  .search svg { width: 21px; height: 21px; margin-right: 14px; }
  .apps { display: flex; width: 682px; margin-left: -1px; }
  .app-ico { width: 62px; height: 50px; flex: none; display: flex; align-items: center; justify-content: center; position: relative; }
  .app-ico svg { width: 32px; height: 32px; }
  .run::after { content: ""; position: absolute; bottom: 0; width: 51px; height: 3px; background: #76b9ed; }
  .active { background: #4b5862; }
  .active::after { width: 62px; }
  .active span { position: absolute; left: 37px; top: 10px; font: 13px/15px "Open Sans", sans-serif; }
  .tray { margin-left: auto; display: flex; align-items: center; width: 350px; }
  .qi { width: 30px; height: 30px; }
  .sysicons { width: 112px; height: 32px; margin-left: 10px; }
  .two { display: flex; flex-direction: column; }
  .two span { height: 23px; line-height: 23px; }
  .lang { width: 30px; margin-left: 11px; }
  .clock { width: 61px; margin-left: 18px; align-items: center; }
  .note { position: relative; width: 20px; height: 20px; margin-left: 27px; }
  .note svg { width: 20px; height: 20px; display: block; }
  .note b { position: absolute; left: 9px; top: 8px; width: 20px; height: 20px; border-radius: 50%; background: #343a3f; border: 1px solid #99a; font: bold 13px/18px "Open Sans", sans-serif; text-align: center; }
  .peek { width: 1px; height: 50px; background: #66717b; margin-left: 25px; }
</style>
